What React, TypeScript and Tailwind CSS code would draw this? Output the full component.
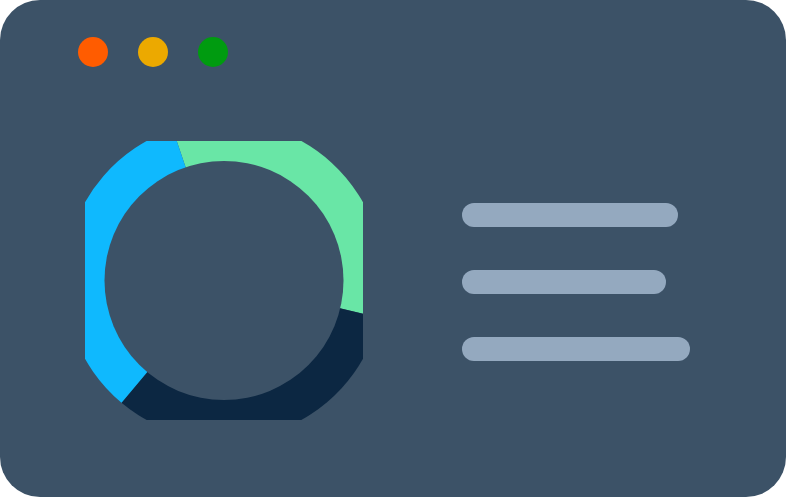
const bars = [216, 204, 228];

function Donut() {
  // ring of radius 159.5 around (139, 139.5), cut off by the box edges
  return (
    <svg width="278" height="279" viewBox="0 0 278 279" className="ml-[7px] shrink-0 overflow-hidden">
      <path d="M139 139.5 L87.8 -11.6 A159.5 159.5 0 0 1 294.1 176.7 Z" fill="#69e6a6" />
      <path d="M139 139.5 L294.1 176.7 A159.5 159.5 0 0 1 36.5 261.7 Z" fill="#0c2742" />
      <path d="M139 139.5 L36.5 261.7 A159.5 159.5 0 0 1 87.8 -11.6 Z" fill="#0fb9fe" />
      <circle cx="139" cy="139.5" r="119.5" fill="#3c5267" />
    </svg>
  );
}

export default function App() {
  return (
    <div className="w-[786px] h-[497px] bg-white">
      <div className="w-full h-full rounded-[40px] bg-[#3c5267] pl-[78px] pt-[37px]">
        <div className="flex gap-[30px]">
          <span className="w-[30px] h-[30px] rounded-full bg-[#ff5c00]" />
          <span className="w-[30px] h-[30px] rounded-full bg-[#eca900]" />
          <span className="w-[30px] h-[30px] rounded-full bg-[#009b10]" />
        </div>
        <div className="flex items-center mt-[74px]">
          <Donut />
          <div className="flex flex-col gap-[43px] ml-[99px] mt-[2px]">
            {bars.map((w, i) => (
              <div key={i} className="h-6 rounded-full bg-[#94a9bf]" style={{ width: w }} />
            ))}
          </div>
        </div>
      </div>
    </div>
  );
}
